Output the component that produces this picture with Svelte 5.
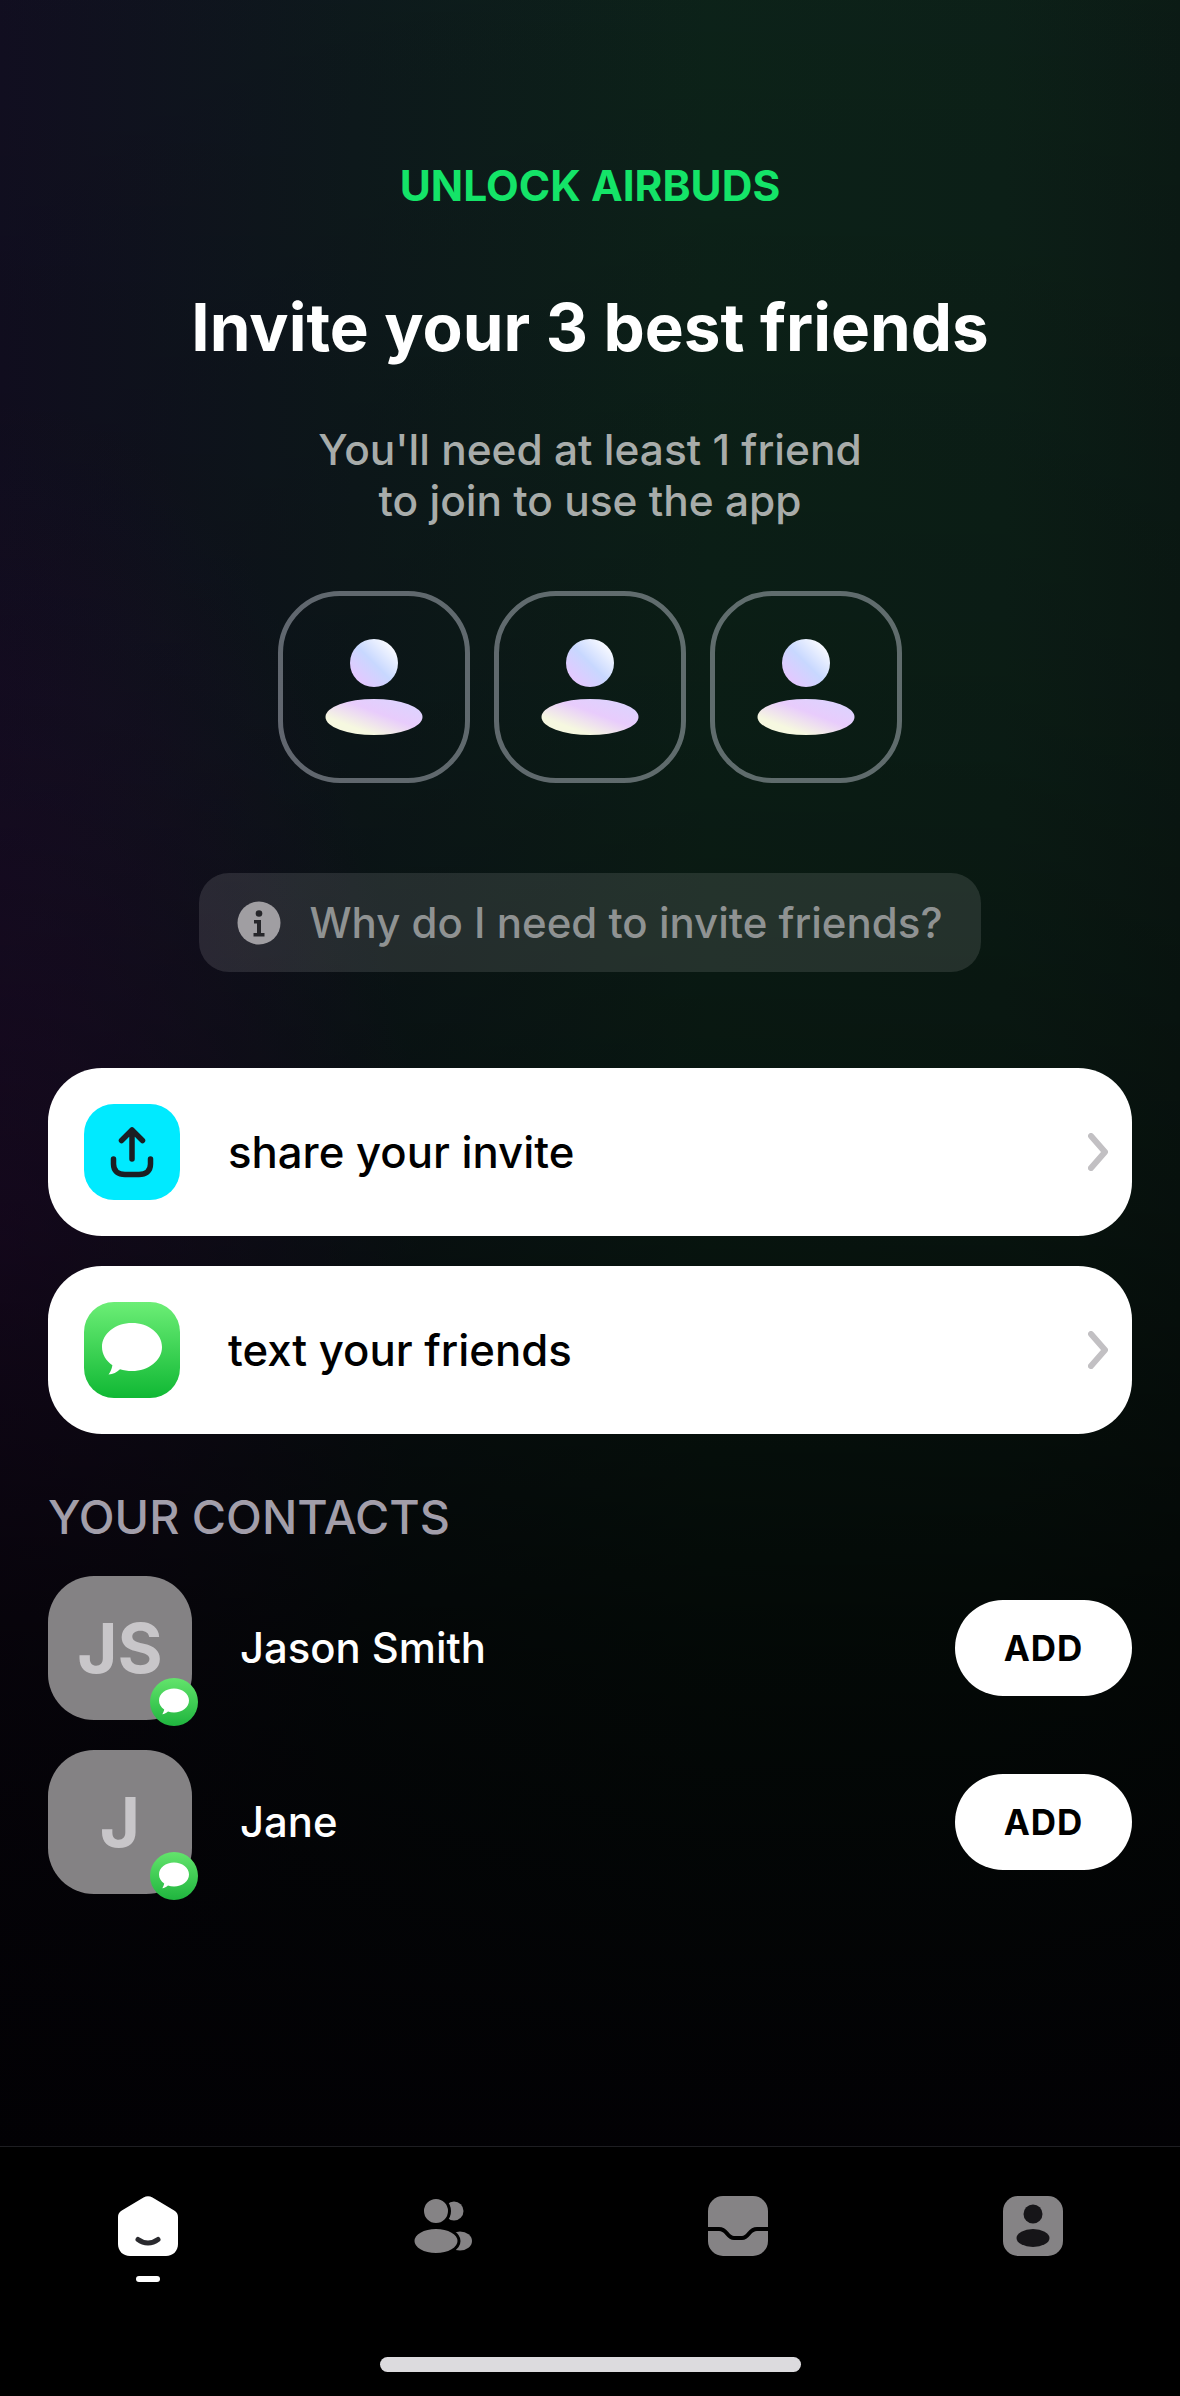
<script>
    const slots = [0, 1, 2];
    const actions = [
        { id: 'share', label: 'share your invite' },
        { id: 'text', label: 'text your friends' }
    ];
    const contacts = [
        { initials: 'JS', name: 'Jason Smith' },
        { initials: 'J', name: 'Jane' }
    ];
</script>

{#snippet bubble()}
    <path d="M48 21c-16.600 0-30 10.600-30 24 0 7.400 4 13.800 10.400 18.200-.6 3.600-2.200 7-3.900 9.300 4.600-.3 8.400-2.300 11.500-5.300 3.700 1.200 7.700 1.800 12 1.800 16.600 0 30-10.600 30-24s-13.400-24-30-24z" fill="#fff" />
{/snippet}

<div class="page">
    <main class="content">
        <p class="eyebrow">UNLOCK AIRBUDS</p>
        <h1>Invite your 3 best friends</h1>
        <p class="sub">You'll need at least 1 friend<br />to join to use the app</p>

        <div class="slots">
            {#each slots as i}
                <div class="slot">
                    <svg width="100" height="100" viewBox="0 0 100 100">
                        <defs>
                            <linearGradient id="head-{i}" x1="1" y1="0" x2="0" y2="1">
                                <stop offset="0.1" stop-color="#fdfdff" />
                                <stop offset="0.5" stop-color="#c8d8ff" />
                                <stop offset="0.85" stop-color="#e4c8ff" />
                            </linearGradient>
                            <linearGradient id="body-{i}" x1="0" y1="1" x2="1" y2="0">
                                <stop offset="0.25" stop-color="#f6f8e0" />
                                <stop offset="0.58" stop-color="#e8ccfc" />
                                <stop offset="1" stop-color="#d8d6ff" />
                            </linearGradient>
                        </defs>
                        <circle cx="50" cy="26" r="24" fill="url(#head-{i})" />
                        <ellipse cx="50" cy="80" rx="48.500" ry="18" fill="url(#body-{i})" />
                    </svg>
                </div>
            {/each}
        </div>

        <div class="why">
            <svg class="info" width="44" height="44" viewBox="0 0 44 44">
                <circle cx="22" cy="22" r="21.500" fill="#a09ea2" />
                <circle cx="22" cy="12.500" r="3.300" fill="#26262a" />
                <path d="M17 19h7v13h3.500v3.500h-11V32h3.500v-9.500h-3z" fill="#26262a" />
            </svg>
            <span>Why do I need to invite friends?</span>
        </div>

        <div class="actions">
            {#each actions as action}
                <button class="action">
                    <span class="app-icon {action.id}">
                        {#if action.id === 'share'}
                            <svg width="96" height="96" viewBox="0 0 96 96" fill="none" stroke="#1b1f24" stroke-width="5.500" stroke-linecap="round" stroke-linejoin="round">
                                <path d="M48 26v29M37.500 36.500 48 26l10.500 10.500" />
                                <path d="M29.500 55v5c0 7.500 5 10.500 11.500 10.500h14c6.500 0 11.500-3 11.500-10.500v-5" />
                            </svg>
                        {:else}
                            <svg width="96" height="96" viewBox="0 0 96 96">
                                {@render bubble()}
                            </svg>
                        {/if}
                    </span>
                    <span class="action-label">{action.label}</span>
                    <svg class="chevron" width="20" height="38" viewBox="0 0 20 38" fill="none" stroke="#c2c0c3" stroke-width="6" stroke-linecap="round" stroke-linejoin="round">
                        <path d="M3 3l14 16L3 35" />
                    </svg>
                </button>
            {/each}
        </div>

        <section class="contacts">
            <h2>YOUR CONTACTS</h2>
            {#each contacts as c}
                <div class="contact">
                    <div class="avatar">
                        {c.initials}
                        <span class="badge">
                            <svg width="48" height="48" viewBox="0 0 96 96">
                                {@render bubble()}
                            </svg>
                        </span>
                    </div>
                    <span class="name">{c.name}</span>
                    <button class="add">ADD</button>
                </div>
            {/each}
        </section>
    </main>

    <footer class="tabbar">
        <div class="tabs">
            <div class="tab">
                <svg width="60" height="60" viewBox="0 0 60 60">
                    <path d="M25.500 1.500 3.800 14.500C1.300 16 0 18.300 0 21v27c0 7 5 12 12 12h36c7 0 12-5 12-12V21c0-2.700-1.300-5-3.800-6.500L34.500 1.500c-3-1.800-6-1.800-9 0z" fill="#fff" />
                    <path d="M20 43.500c6 4.500 14 4.500 20 0" fill="none" stroke="#2a2a2e" stroke-width="5" stroke-linecap="round" />
                </svg>
                <span class="marker"></span>
            </div>
            <div class="tab">
                <svg width="60" height="60" viewBox="0 0 60 60">
                    <circle cx="41" cy="15" r="9.500" fill="#858385" />
                    <ellipse cx="47" cy="45" rx="12" ry="9.500" fill="#858385" />
                    <circle cx="23" cy="15" r="13.500" fill="#858385" stroke="#000" stroke-width="3" />
                    <ellipse cx="23" cy="45" rx="23" ry="13.500" fill="#858385" stroke="#000" stroke-width="3" />
                </svg>
            </div>
            <div class="tab">
                <svg width="60" height="60" viewBox="0 0 60 60">
                    <rect width="60" height="60" rx="15" fill="#858385" />
                    <path d="M0 33h11c4 0 6 2 8 4.500 2 2.500 4 4.500 7 4.500h8c3 0 5-2 7-4.500s4-4.500 8-4.500h11" fill="none" stroke="#000" stroke-width="4" />
                </svg>
            </div>
            <div class="tab">
                <svg width="60" height="60" viewBox="0 0 60 60">
                    <rect width="60" height="60" rx="15" fill="#858385" />
                    <circle cx="30" cy="18" r="9.500" fill="#161518" />
                    <ellipse cx="30" cy="42" rx="16.500" ry="9" fill="#161518" />
                </svg>
            </div>
        </div>
        <div class="home-bar"></div>
    </footer>
</div>

<style>
    :global(body) {
        margin: 0;
        background: #000;
    }

    .page {
        width: 1180px;
        height: 2396px;
        display: flex;
        flex-direction: column;
        font-family: Inter, "Liberation Sans", sans-serif;
        color: #fff;
        background:
            linear-gradient(rgba(0, 0, 0, 0.05), rgba(0, 0, 0, 0.2) 30%, rgba(0, 0, 0, 0.42) 50%, rgba(0, 0, 0, 0.75) 68%, #020104 90%),
            radial-gradient(ellipse 420px 850px at 0 1250px, rgba(50, 12, 62, 0.5), transparent),
            linear-gradient(90deg, #120f22, #0e1a1d 30%, #0d241a 60%, #0d2219 85%, #0c1c16);
    }

    .content {
        flex: 1;
        display: flex;
        flex-direction: column;
        align-items: center;
        padding: 0 48px;
    }

    .eyebrow {
        margin: 162px 0 0;
        font-size: 42.500px;
        line-height: 48px;
        font-weight: 700;
        color: #14e468;
    }

    h1 {
        margin: 79px 0 0;
        font-size: 65.500px;
        line-height: 78px;
        font-weight: 700;
    }

    .sub {
        margin: 57px 0 0;
        font-size: 42.400px;
        line-height: 51px;
        font-weight: 500;
        text-align: center;
        color: #a8acaa;
    }

    .slots {
        display: flex;
        gap: 24px;
        margin-top: 65px;
    }

    .slot {
        width: 192px;
        height: 192px;
        box-sizing: border-box;
        border: 5px solid rgba(214, 220, 230, 0.42);
        border-radius: 62px;
        display: flex;
        align-items: center;
        justify-content: center;
    }

    .why {
        display: flex;
        align-items: center;
        gap: 28px;
        margin-top: 90px;
        height: 99px;
        padding: 0 38px;
        border-radius: 30px;
        background: rgba(255, 255, 255, 0.11);
        font-size: 42px;
        font-weight: 500;
        color: #8f9292;
    }

    .actions {
        align-self: stretch;
        display: flex;
        flex-direction: column;
        gap: 30px;
        margin-top: 96px;
    }

    .action {
        height: 168px;
        padding: 0 24px 0 36px;
        border: none;
        border-radius: 54px;
        background: #fff;
        display: flex;
        align-items: center;
        gap: 48px;
        font-family: inherit;
        color: #000;
    }

    .app-icon {
        width: 96px;
        height: 96px;
        border-radius: 30px;
        display: block;
    }

    .app-icon svg {
        display: block;
    }

    .share {
        background: #00eaff;
    }

    .text {
        background: linear-gradient(#6cee76, #10b834);
    }

    .action-label {
        flex: 1;
        text-align: left;
        font-size: 43.700px;
        font-weight: 500;
    }

    .contacts {
        align-self: stretch;
        margin-top: 57px;
    }

    h2 {
        margin: 0 0 33px;
        font-size: 46.700px;
        line-height: 52px;
        font-weight: 500;
        color: #a29eaa;
    }

    .contact {
        display: flex;
        align-items: center;
        height: 144px;
        margin-bottom: 30px;
    }

    .avatar {
        position: relative;
        width: 144px;
        height: 144px;
        border-radius: 46px;
        background: #848284;
        display: flex;
        align-items: center;
        justify-content: center;
        font-size: 69px;
        font-weight: 700;
        color: #c8c6c9;
    }

    .badge {
        position: absolute;
        right: -6px;
        bottom: -6px;
        width: 48px;
        height: 48px;
        border-radius: 50%;
        background: linear-gradient(#63e46c, #1fb53e);
    }

    .badge svg {
        display: block;
    }

    .name {
        flex: 1;
        margin-left: 48px;
        font-size: 41.800px;
        font-weight: 500;
    }

    .add {
        width: 177px;
        height: 96px;
        border: none;
        border-radius: 48px;
        background: #fff;
        color: #000;
        font-family: inherit;
        font-size: 35px;
        font-weight: 700;
        letter-spacing: 1px;
    }

    .tabbar {
        height: 250px;
        box-sizing: border-box;
        border-top: 1px solid #1e1e22;
        background: #000;
        display: flex;
        flex-direction: column;
        align-items: center;
    }

    .tabs {
        align-self: stretch;
        display: grid;
        grid-template-columns: repeat(4, 1fr);
        padding-top: 49px;
        height: 210px;
        box-sizing: border-box;
    }

    .tab {
        display: flex;
        flex-direction: column;
        align-items: center;
        gap: 20px;
    }

    .tab svg {
        display: block;
    }

    .marker {
        width: 24px;
        height: 6px;
        border-radius: 3px;
        background: #fff;
    }

    .home-bar {
        width: 421px;
        height: 15px;
        border-radius: 8px;
        background: #dcdbde;
    }
</style>
